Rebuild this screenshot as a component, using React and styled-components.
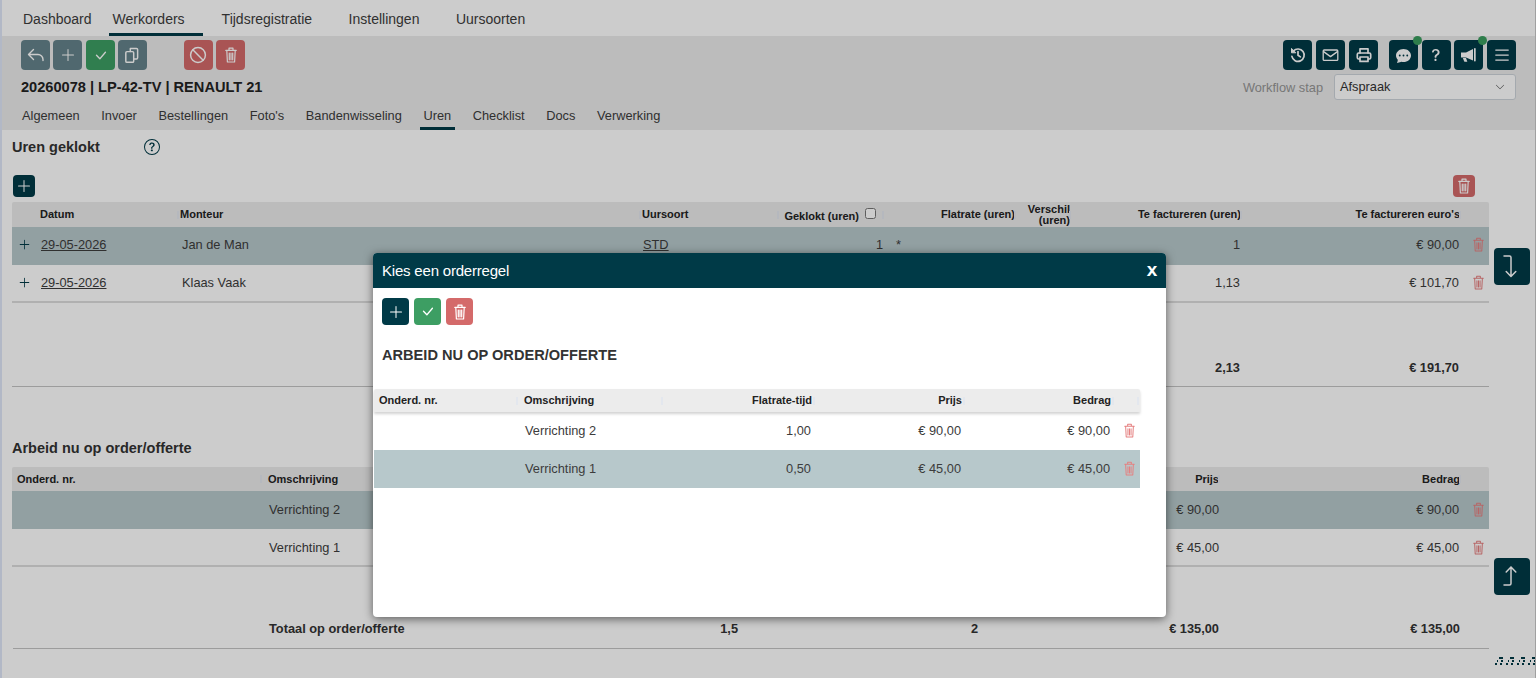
import React from "react";
import styled, { createGlobalStyle } from "styled-components";
import { BsPlusLg, BsCheckLg, BsChatDotsFill, BsQuestionLg, BsList, BsQuestionCircle, BsChevronDown } from "react-icons/bs";

const Global = createGlobalStyle`
  html, body { margin: 0; padding: 0; height: 100%; overflow: hidden; background: #fff; }
  body { font-family: "Liberation Sans", Arial, sans-serif; color: #333; }
  * { box-sizing: border-box; }
`;

const DARK = "#003a47";
const Page = styled.div`
  position: relative;
  width: 1536px;
  height: 678px;
  overflow: hidden;
  background: #fff;
  border-left: 2px solid #b2b8c6;
  border-right: 1px solid #a0a0a0;
`;
const Nav = styled.nav`
  display: flex;
  height: 36px;
  padding-left: 17px;
`;
const NavTab = styled.div`
  height: 36px;
  padding: 11px ${p => p.$pr ?? 18}px 0 4px;
  margin-right: ${p => p.$mr ?? 14.5}px;
  font-size: 14px;
  line-height: 17px;
  color: #3c3c3c;
  border-bottom: 3px solid ${p => (p.$active ? DARK : "transparent")};
`;
const Sub = styled.header`
  height: 94px;
  background: #ebebeb;
  padding: 4px 19px 0 19px;
  display: flex;
  flex-direction: column;
`;
const SubTop = styled.div`
  display: flex;
  justify-content: space-between;
`;
const BtnGroup = styled.div`
  display: flex;
  gap: ${p => p.$gap || 3.3}px;
  margin-left: ${p => p.$ml || 0}px;
`;
const BtnRow = styled.div`
  display: flex;
`;
const Btn = styled.button`
  position: relative;
  width: ${p => p.$w || 29}px;
  height: ${p => p.$h || 30}px;
  padding: 0;
  border: 0;
  border-radius: 4px;
  display: flex;
  align-items: center;
  justify-content: center;
  color: #fff;
  font-size: ${p => p.$fs || 16}px;
  background: ${p => p.$bg || DARK};
`;
const Badge = styled.span`
  position: absolute;
  top: -4px;
  right: -4px;
  width: 9px;
  height: 9px;
  border-radius: 50%;
  background: #3a9d5e;
`;
const TitleRow = styled.div`
  display: flex;
  justify-content: space-between;
  margin-top: 4px;
  height: 26px;
`;
const Title = styled.h1`
  margin: 3px 0 0;
  font-size: 14.6px;
  line-height: 20px;
  font-weight: 700;
  color: #222;
`;
const Workflow = styled.div`
  display: flex;
  align-items: center;
  gap: 11px;
  font-size: 12.8px;
  color: #959595;
`;
const Select = styled.div`
  width: 182px;
  height: 26px;
  background: #fff;
  border: 1px solid #ced4da;
  border-radius: 3px;
  padding: 0 6px 2px 5px;
  display: flex;
  align-items: center;
  justify-content: space-between;
  font-size: 12.8px;
  color: #333;
  svg { font-size: 10px; color: #444; margin: 2px 4px 0 0; }
`;
const SubTabs = styled.div`
  display: flex;
  gap: 14.6px;
  margin-top: 2px;
  margin-left: -2.5px;
`;
const SubTab = styled.div`
  height: 28px;
  padding: 6px 3.5px 0;
  font-size: 12.8px;
  line-height: 16px;
  color: #3c3c3c;
  border-bottom: 3px solid ${p => (p.$active ? DARK : "transparent")};
`;
const Content = styled.main`
  padding: 0 46px 0 10px;
`;
const SectionHead = styled.div`
  display: flex;
  align-items: center;
  height: 33px;
  font-size: 14.5px;
  font-weight: 700;
  color: #333;
  svg { font-size: 16px; color: ${DARK}; margin-left: 44px; }
`;
const Actions = styled.div`
  display: flex;
  justify-content: space-between;
  align-items: center;
  margin-top: 12px;
  padding: 0 14px 0 1px;
  height: 22px;
`;
const Grid = styled.div`
  display: grid;
  grid-template-columns: ${p => p.$cols};
  align-items: center;
`;
const HeadRow = styled(Grid)`
  margin-top: 5px;
  height: 25px;
  background: ${p => (p.$modal ? "#ececec" : "#ebebeb")};
  box-shadow: ${p => (p.$modal ? "0 2px 3px rgba(0,0,0,.18)" : "none")};
  border-radius: 2px 2px 0 0;
`;
const Th = styled.div`
  position: relative;
  font-size: 11px;
  line-height: 11px;
  font-weight: 700;
  color: #222;
  text-align: ${p => p.$align || "left"};
  padding: 0 ${p => (p.$align === "right" ? 2 : 0)}px 0 ${p => p.$pl ?? 0}px;
  &::after {
    content: "";
    display: ${p => (p.$noTick ? "none" : "block")};
    position: absolute;
    right: 1px;
    top: 50%;
    margin-top: -4px;
    width: 2px;
    height: 8px;
    background: #e3e7ee;
  }
`;
const ModalTh = styled(Th)`
  padding-right: ${p => (p.$align === "right" ? 4 : 0)}px;
`;
const HeadCheck = styled.input`
  width: 11px;
  height: 11px;
  margin: 0 7px 0 3px;
  vertical-align: 1px;
`;
const Row = styled(Grid)`
  height: 38px;
  padding-bottom: ${p => p.$pb ?? 2}px;
  background: ${p => (p.$selected ? "#b7c8cb" : "transparent")};
  border-bottom: ${p => (p.$last ? "2px solid #dcdcdc" : "none")};
  font-size: 12.8px;
  color: #3c3c3c;
`;
const Td = styled.div`
  text-align: ${p => p.$align || "left"};
  padding-right: ${p => (p.$align === "right" ? p.$pr ?? 3 : 0)}px;
  padding-left: ${p => p.$pl ?? 0}px;
  white-space: nowrap;
`;
const ModalTd = styled(Td)`
  padding-right: ${p => (p.$align === "right" ? 5 : 0)}px;
`;
const TotalLabel = styled(Td)`
  display: flex;
  justify-content: space-between;
  padding-right: 3px;
`;
const DateLink = styled.span`
  text-decoration: underline;
`;
const Expand = styled.div`
  display: flex;
  justify-content: center;
  font-size: 13px;
  color: ${DARK};
  padding-right: 4px;
`;
const RowTrash = styled.div`
  display: flex;
  justify-content: center;
  padding-left: ${p => p.$pl ?? 5}px;
  color: #e58080;
`;
const Totals = styled(Grid)`
  font-size: 12.8px;
  font-weight: 700;
  color: #333;
  border-bottom: 1px solid #c4c4c4;
  align-items: start;
`;
const Totals1 = styled(Totals)`
  margin-top: 57px;
  height: 27px;
`;
const SectionHead2 = styled(SectionHead)`
  margin-top: 46px;
  height: 30px;
`;
const HeadRow2 = styled(HeadRow)`
  margin-top: 4px;
  height: 24px;
`;
const Totals2 = styled(Totals)`
  margin-top: 54px;
  height: 28px;
  margin-left: 1px;
`;
const FloatBtn = styled(Btn)`
  position: absolute;
  left: 1492px;
  top: ${p => p.$top}px;
  width: 36px;
  height: 37px;
`;
const Grip = styled.svg`
  position: absolute;
  left: 1491px;
  top: 657px;
`;
const Overlay = styled.div`
  position: absolute;
  inset: 0 -2px;
  background: rgba(0, 0, 0, 0.2);
`;
const Modal = styled.section`
  position: absolute;
  left: 371px;
  top: 253px;
  width: 793px;
  height: 364px;
  background: #fff;
  border-radius: 4px;
  box-shadow: 0 2px 10px rgba(0, 0, 0, 0.55);
  overflow: hidden;
`;
const ModalHead = styled.div`
  height: 35px;
  background: ${DARK};
  color: #fff;
  display: flex;
  align-items: center;
  justify-content: space-between;
  padding: 0 9px;
  font-size: 15px;
  letter-spacing: -0.2px;
`;
const CloseX = styled.span`
  font-size: 19px;
  font-weight: 700;
  line-height: 19px;
  margin-top: -2px;
`;
const ModalBody = styled.div`
  padding: 10px 26px 0 1px;
`;
const ModalButtons = styled(BtnGroup)`
  margin-left: 8px;
  gap: 5px;
`;
const ModalTitle = styled.h2`
  margin: 21px 0 0 8px;
  font-size: 14.6px;
  line-height: 18px;
  font-weight: 700;
  color: #333;
`;
const ModalHeadRow = styled(HeadRow)`
  margin-top: 25px;
  height: 23px;
`;

const c1 = "28px 140px 462px 138px 105px 25px 107px 55px 171px 219px 27px";
const c2 = "251px 477px 240px 241px 241px 27px";
const c3 = "145px 145px 152px 150px 149px 25px";

const Ico = ({ w = 16, h = 16, vb = "0 0 16 16", sw = 1.3, children }) => (
  <svg width={w} height={h} viewBox={vb} fill="none" stroke="currentColor" strokeWidth={sw} strokeLinecap="round" strokeLinejoin="round">
    {children}
  </svg>
);
const TrashIcon = ({ w = 12, h = 16, sw = 1.2 }) => (
  <Ico w={w} h={h} vb="0 0 12 16" sw={sw}>
    <path d="M.8 3.4h10.4M4 3.2V1.2h4v2M1.8 3.6l.6 11.4h7.2l.6-11.4M4.3 6v6.8M6 6v6.8M7.7 6v6.8" />
  </Ico>
);
const ReplyIcon = () => (
  <Ico sw={1.4} w={18} vb="0 0 18 16"><path d="M6.5 2.5 1.5 7.5l5 5M1.8 7.5h9.2a5 5 0 0 1 5 5v1" /></Ico>
);
const CopyIcon = () => (
  <Ico w={18} h={18}><rect x="2.5" y="5" width="7" height="9.5" rx="1" /><path d="M6.5 4.8V2.2h5.5a1 1 0 0 1 1 1v7.3a1 1 0 0 1-1 1H9.6" /></Ico>
);
const BanIcon = () => (
  <Ico w={18} h={18} vb="0 0 16 16" sw={1.3}><circle cx="8" cy="8" r="6.6" /><path d="M3.4 3.4l9.2 9.2" /></Ico>
);
const HistoryIcon = () => (
  <Ico sw={1.7}>
    <path d="M3.4 4a6.2 6.2 0 1 1-1.5 5.4" />
    <path d="M1.5 1.8v4h4z" fill="currentColor" strokeWidth="1" />
    <path d="M8 4.6v3.7l2.4 1.6" />
  </Ico>
);
const MailIcon = () => (
  <Ico w={17} sw={1.3} vb="0 0 17 16"><rect x="1.2" y="3" width="14.6" height="10.4" rx="1" /><path d="M1.6 4.6 8.5 9.6l6.9-5" /></Ico>
);
const PrinterIcon = () => (
  <Ico sw={1.7}>
    <path d="M4 6V1.8h8V6" />
    <rect x="1.3" y="6" width="13.4" height="6" rx="1.4" />
    <rect x="4" y="10" width="8" height="4.4" fill={DARK} />
  </Ico>
);
const HornIcon = () => (
  <svg width="17" height="16" viewBox="0 0 17 16" fill="currentColor">
    <path d="M1 5.4h5L13 2v11.6L6 10.4H1z" />
    <path d="M2.8 11h3.2l1.3 3.8H4.4z" />
    <rect x="14" y="1" width="1.7" height="13.6" rx=".8" />
  </svg>
);
const ArrowDown = () => (
  <Ico w={36} h={37} vb="0 0 36 37" sw={1.5}><path d="M10 8h5.5a1.5 1.5 0 0 1 1.5 1.5V28M12.2 23.5 17 28.5l4.8-5" /></Ico>
);
const ArrowUp = () => (
  <Ico w={36} h={37} vb="0 0 36 37" sw={1.5}><path d="M10 27h5.5a1.5 1.5 0 0 0 1.5-1.5V9M12.2 14 17 9l4.8 5" /></Ico>
);

const Trash = ({ pl }) => <RowTrash $pl={pl}><TrashIcon w={11} h={15} sw={1.1} /></RowTrash>;

const WorkRow = ({ date, name, soort, klok, star, fact, euro, selected, last }) => (
  <Row $cols={c1} $selected={selected} $last={last} $pb={last ? 1 : 3}>
    <Expand><BsPlusLg /></Expand>
    <Td $pl={1}><DateLink>{date}</DateLink></Td>
    <Td $pl={2}>{name}</Td>
    <Td $pl={1}><DateLink>{soort}</DateLink></Td>
    <Td $align="right" $pr={2}>{klok}</Td>
    <Td $pl={11}>{star}</Td>
    <Td />
    <Td />
    <Td $align="right">{fact}</Td>
    <Td $align="right">{euro}</Td>
    <Trash />
  </Row>
);

const OrderRow = ({ name, prijs, selected, last }) => (
  <Row $cols={c2} $selected={selected} $last={last} $pb={last ? 0 : 2}>
    <Td />
    <Td $pl={6}>{name}</Td>
    <Td />
    <Td $align="right" $pr={2}>{prijs}</Td>
    <Td $align="right">{prijs}</Td>
    <Trash />
  </Row>
);

const ModalRow = ({ name, tijd, prijs, selected }) => (
  <Row $cols={c3} $selected={selected}>
    <Td />
    <Td $pl={6}>{name}</Td>
    <ModalTd $align="right">{tijd}</ModalTd>
    <ModalTd $align="right">{prijs}</ModalTd>
    <ModalTd $align="right">{prijs}</ModalTd>
    <Trash pl={4} />
  </Row>
);

const Dots = () => {
  const pts = [];
  for (let i = 0; i < 4; i++) {
    const x = i * 11;
    pts.push([x + 6, 0, 4], [x + 4, 3, 1], [x + 8, 3, 2], [x + 2, 6, 2], [x + 7, 6, 2]);
  }
  return (
    <Grip width="45" height="9" viewBox="0 0 45 9">
      {pts.map(([x, y, w], i) => <rect key={i} x={x} y={y} width={w} height="2" fill={DARK} />)}
    </Grip>
  );
};

export default function App() {
  const gray = "#64838b", green = "#3d9e63", red = "#d46a6a";
  return (
    <Page>
      <Global />
      <Nav>
        <NavTab $mr={0} $pr={17}>Dashboard</NavTab>
        <NavTab $active $mr={15}>Werkorders</NavTab>
        <NavTab>Tijdsregistratie</NavTab>
        <NavTab>Instellingen</NavTab>
        <NavTab>Uursoorten</NavTab>
      </Nav>
      <Sub>
        <SubTop>
          <BtnRow>
            <BtnGroup>
              <Btn $bg={gray}><ReplyIcon /></Btn>
              <Btn $bg={gray}><BsPlusLg /></Btn>
              <Btn $bg={green} $fs={15}><BsCheckLg /></Btn>
              <Btn $bg={gray}><CopyIcon /></Btn>
            </BtnGroup>
            <BtnGroup $ml={37}>
              <Btn $bg={red}><BanIcon /></Btn>
              <Btn $bg={red}><TrashIcon /></Btn>
            </BtnGroup>
          </BtnRow>
          <BtnRow>
            <BtnGroup $gap={4}>
              <Btn><HistoryIcon /></Btn>
              <Btn><MailIcon /></Btn>
              <Btn><PrinterIcon /></Btn>
            </BtnGroup>
            <BtnGroup $gap={3.67} $ml={11}>
              <Btn $fs={15}><BsChatDotsFill /><Badge /></Btn>
              <Btn $fs={16}><BsQuestionLg /></Btn>
              <Btn><HornIcon /><Badge /></Btn>
              <Btn $fs={20}><BsList /></Btn>
            </BtnGroup>
          </BtnRow>
        </SubTop>
        <TitleRow>
          <Title>20260078 | LP-42-TV | RENAULT 21</Title>
          <Workflow>
            <span>Workflow stap</span>
            <Select>Afspraak<BsChevronDown /></Select>
          </Workflow>
        </TitleRow>
        <SubTabs>
          <SubTab>Algemeen</SubTab>
          <SubTab>Invoer</SubTab>
          <SubTab>Bestellingen</SubTab>
          <SubTab>Foto's</SubTab>
          <SubTab>Bandenwisseling</SubTab>
          <SubTab $active>Uren</SubTab>
          <SubTab>Checklist</SubTab>
          <SubTab>Docs</SubTab>
          <SubTab>Verwerking</SubTab>
        </SubTabs>
      </Sub>
      <Content>
        <SectionHead>Uren geklokt<BsQuestionCircle /></SectionHead>
        <Actions>
          <Btn $w={22} $h={22}><BsPlusLg /></Btn>
          <Btn $w={22} $h={22} $bg={red}><TrashIcon /></Btn>
        </Actions>
        <HeadRow $cols={c1}>
          <Th $noTick />
          <Th>Datum</Th>
          <Th>Monteur</Th>
          <Th>Uursoort</Th>
          <Th $align="right">Geklokt (uren) <HeadCheck type="checkbox" /></Th>
          <Th $noTick />
          <Th $align="right">Flatrate (uren)</Th>
          <Th $align="right">Verschil (uren)</Th>
          <Th $align="right">Te factureren (uren)</Th>
          <Th $align="right">Te factureren euro's</Th>
          <Th $noTick />
        </HeadRow>
        <WorkRow selected date="29-05-2026" name="Jan de Man" soort="STD" klok="1" star="*" fact="1" euro="€ 90,00" />
        <WorkRow last date="29-05-2026" name="Klaas Vaak" soort="" klok="" star="" fact="1,13" euro="€ 101,70" />
        <Totals1 $cols={c1}>
          <Td /><Td /><Td /><Td /><Td /><Td /><Td /><Td />
          <Td $align="right">2,13</Td>
          <Td $align="right">€ 191,70</Td>
          <Td />
        </Totals1>
        <SectionHead2>Arbeid nu op order/offerte</SectionHead2>
        <HeadRow2 $cols={c2}>
          <Th $pl={5}>Onderd. nr.</Th>
          <Th $pl={5}>Omschrijving</Th>
          <Th />
          <Th $align="right">Prijs</Th>
          <Th $align="right">Bedrag</Th>
          <Th $noTick />
        </HeadRow2>
        <OrderRow selected name="Verrichting 2" prijs="€ 90,00" />
        <OrderRow last name="Verrichting 1" prijs="€ 45,00" />
        <Totals2 $cols={c2}>
          <Td />
          <TotalLabel $pl={5}><span>Totaal op order/offerte</span><span>1,5</span></TotalLabel>
          <Td $align="right">2</Td>
          <Td $align="right">€ 135,00</Td>
          <Td $align="right">€ 135,00</Td>
          <Td />
        </Totals2>
      </Content>
      <FloatBtn $top={248}><ArrowDown /></FloatBtn>
      <FloatBtn $top={558}><ArrowUp /></FloatBtn>
      <Dots />
      <Overlay />
      <Modal>
        <ModalHead>Kies een orderregel<CloseX>x</CloseX></ModalHead>
        <ModalBody>
          <ModalButtons>
            <Btn $w={27} $h={27}><BsPlusLg /></Btn>
            <Btn $w={27} $h={27} $bg={green} $fs={15}><BsCheckLg /></Btn>
            <Btn $w={27} $h={27} $bg={red}><TrashIcon /></Btn>
          </ModalButtons>
          <ModalTitle>ARBEID NU OP ORDER/OFFERTE</ModalTitle>
          <ModalHeadRow $cols={c3} $modal>
            <ModalTh $pl={5}>Onderd. nr.</ModalTh>
            <ModalTh $pl={5}>Omschrijving</ModalTh>
            <ModalTh $align="right">Flatrate-tijd</ModalTh>
            <ModalTh $align="right">Prijs</ModalTh>
            <ModalTh $align="right">Bedrag</ModalTh>
            <ModalTh />
          </ModalHeadRow>
          <ModalRow name="Verrichting 2" tijd="1,00" prijs="€ 90,00" />
          <ModalRow selected name="Verrichting 1" tijd="0,50" prijs="€ 45,00" />
        </ModalBody>
      </Modal>
    </Page>
  );
}
